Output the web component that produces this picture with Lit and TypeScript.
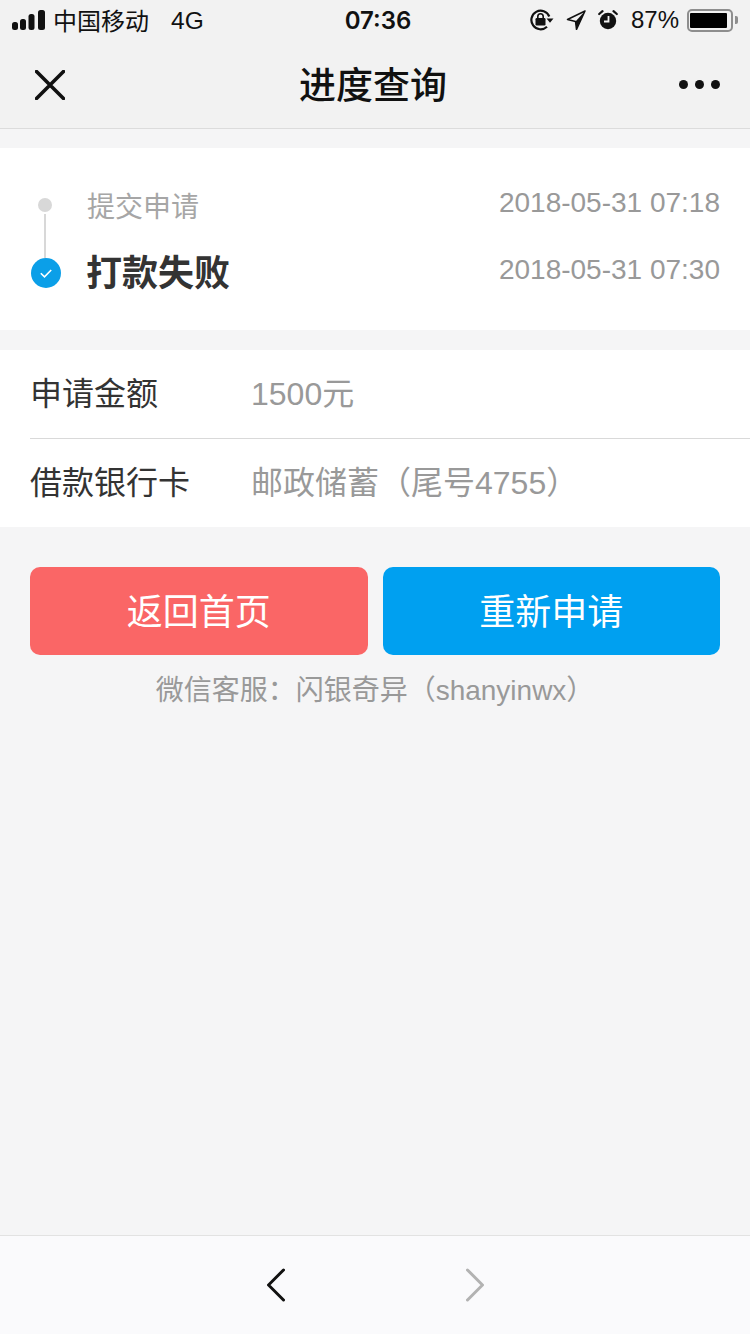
import {LitElement, html, css} from 'lit';
import {customElement} from 'lit/decorators.js';

@customElement('app-root')
export class AppRoot extends LitElement {
  render() {
    return html`
      <div class="page">
        <header class="top">
          <div class="status">
            <div class="status-left">
              <svg class="signal" width="33" height="20" viewBox="0 0 33 20">
                <rect x="0" y="12" width="6" height="8" rx="2.500" fill="#111"/>
                <rect x="8" y="9" width="6" height="11" rx="2.500" fill="#111"/>
                <rect x="16.500" y="4" width="6" height="16" rx="2.500" fill="#111"/>
                <rect x="26" y="0" width="7" height="20" rx="2.500" fill="#111"/>
              </svg>
              <span class="carrier">中国移动</span>
              <span class="net">4G</span>
            </div>
            <div class="clock">07:36</div>
            <div class="status-right">
              <svg class="lock" width="24" height="22" viewBox="0 0 24 22" fill="none">
                <path d="M19.300 7.500A9.300 9.300 0 1 0 17 17.800" stroke="#111" stroke-width="2.200"/>
                <path d="M16.500 9.500h7l-3.500 4.200z" fill="#111"/>
                <rect x="5.500" y="9" width="10" height="7.500" rx="1.200" fill="#111"/>
                <path d="M7.800 9V7.500a2.700 2.700 0 0 1 5.400 0V9" stroke="#111" stroke-width="1.600"/>
              </svg>
              <svg class="arrow" width="20" height="20" viewBox="0 0 20 20" fill="none">
                <path d="M19 1 1.500 9.500 9.500 11.500 10.500 19.500z" stroke="#111" stroke-width="1.500" stroke-linejoin="round"/>
                <path d="M19 1 9.500 11.500 10.500 19.500z" fill="#111"/>
              </svg>
              <svg class="alarm" width="20" height="20" viewBox="0 0 20 20">
                <circle cx="10" cy="11" r="8.200" fill="#111"/>
                <path d="M10.500 6v5.500H6" stroke="#f2f2f2" stroke-width="1.800" fill="none"/>
                <path d="M1.200 4 4.500 1.200M18.800 4 15.500 1.200" stroke="#111" stroke-width="2.200" stroke-linecap="round"/>
              </svg>
              <span class="pct">87%</span>
              <div class="battery"><div class="level"></div></div>
              <span class="nub"></span>
            </div>
          </div>
          <div class="nav">
            <svg class="close" width="30" height="30" viewBox="0 0 30 30">
              <path d="M1.500 1.500 28.500 28.500M28.500 1.500 1.500 28.500" stroke="#111" stroke-width="3.600" stroke-linecap="round"/>
            </svg>
            <h1>进度查询</h1>
            <div class="more"><i></i><i></i><i></i></div>
          </div>
        </header>

        <section class="steps">
          <div class="step-row first">
            <div class="marker"><span class="dot"></span></div>
            <span class="step-name">提交申请</span>
            <span class="date">2018-05-31 07:18</span>
          </div>
          <div class="step-row last">
            <div class="marker">
              <span class="line"></span>
              <svg class="tick" width="30" height="30" viewBox="0 0 30 30">
                <circle cx="15" cy="15" r="15" fill="#0b9fe8"/>
                <path d="M9.800 15.200 13.500 18.800 20.200 12" stroke="#fff" stroke-width="1.600" fill="none"/>
              </svg>
            </div>
            <span class="step-name current">打款失败</span>
            <span class="date">2018-05-31 07:30</span>
          </div>
        </section>

        <section class="info">
          <div class="info-row">
            <span class="label">申请金额</span>
            <span class="value">1500元</span>
          </div>
          <div class="info-row">
            <span class="label">借款银行卡</span>
            <span class="value">邮政储蓄（尾号4755）</span>
          </div>
        </section>

        <div class="actions">
          <button class="home">返回首页</button>
          <button class="again">重新申请</button>
        </div>
        <p class="service">微信客服：闪银奇异（shanyinwx）</p>

        <div class="spacer"></div>

        <footer class="bottom">
          <svg width="18" height="34" viewBox="0 0 18 34" fill="none">
            <path d="M16.500 2 1.500 17 16.500 32" stroke="#111" stroke-width="3" stroke-linecap="round"/>
          </svg>
          <svg width="18" height="34" viewBox="0 0 18 34" fill="none">
            <path d="M1.500 2 16.500 17 1.500 32" stroke="#b2b2b2" stroke-width="3" stroke-linecap="round"/>
          </svg>
        </footer>
      </div>
    `;
  }

  static get styles() {
    return css`
      :host {
        display: block;
        font-family: 'Liberation Sans', 'Noto Sans CJK SC', sans-serif;
      }
      .page {
        height: 1334px;
        display: flex;
        flex-direction: column;
        background: #f5f5f6;
        overflow: hidden;
      }
      .top {
        height: 129px;
        box-sizing: border-box;
        background: #f2f2f2;
        border-bottom: 1px solid #dcdcdc;
      }
      .status {
        height: 40px;
        display: grid;
        grid-template-columns: 1fr auto 1fr;
        align-items: center;
        padding: 0 12px;
        color: #111;
        font-size: 24px;
      }
      .status-left {
        display: flex;
        align-items: center;
      }
      .signal {
        margin-right: 8px;
      }
      .carrier {
        padding-bottom: 2px;
      }
      .net {
        margin-left: 22px;
        font-size: 24.500px;
        padding-top: 2px;
      }
      .clock {
        padding-left: 6px;
        font-family: Inter, 'Liberation Sans', sans-serif;
        font-size: 24px;
        font-weight: 600;
      }
      .status-right {
        display: flex;
        align-items: center;
        justify-content: flex-end;
      }
      .arrow {
        margin-left: 12px;
      }
      .alarm {
        margin-left: 12px;
      }
      .pct {
        margin-left: 13px;
        font-size: 24px;
      }
      .battery {
        box-sizing: border-box;
        width: 46px;
        height: 23px;
        margin-left: 8px;
        padding: 2px 1px;
        border: 2px solid #8e8e8e;
        border-radius: 5px;
      }
      .level {
        width: 37px;
        height: 100%;
        background: #000;
        border-radius: 1px;
      }
      .nub {
        width: 3px;
        height: 8px;
        margin-left: 2px;
        background: #8e8e8e;
        border-radius: 0 2px 2px 0;
      }
      .nav {
        height: 88px;
        display: grid;
        grid-template-columns: 1fr auto 1fr;
        align-items: center;
        padding: 0 34px 0 30px;
      }
      .close {
        margin: 1px 0 0 5px;
      }
      h1 {
        margin: 0;
        padding-top: 6px;
        color: #111;
        font-size: 37px;
        font-weight: 500;
        line-height: 82px;
      }
      .more {
        justify-self: end;
        margin-right: -4px;
        display: flex;
        gap: 7px;
      }
      .more i {
        width: 9px;
        height: 9px;
        border-radius: 50%;
        background: #111;
      }
      .steps {
        margin-top: 19px;
        height: 182px;
        box-sizing: border-box;
        padding: 29px 30px 0 30px;
        background: #fff;
      }
      .step-row {
        display: flex;
        align-items: center;
      }
      .step-row.first {
        height: 56px;
      }
      .step-row.last {
        height: 78px;
      }
      .marker {
        flex: none;
        width: 30px;
        height: 30px;
        margin-right: 27px;
        display: flex;
        align-items: center;
        justify-content: center;
        position: relative;
      }
      .dot {
        width: 14px;
        height: 14px;
        border-radius: 50%;
        background: #d8d8d8;
      }
      .line {
        position: absolute;
        left: 14px;
        bottom: 29px;
        width: 2px;
        height: 44px;
        background: #d8d8d8;
      }
      .tick {
        flex: none;
        margin: 2px 0 0 2px;
      }
      .step-name {
        flex: 1;
        color: #a6a6a6;
        font-size: 28px;
      }
      .step-name.current {
        margin-left: -1px;
        padding-bottom: 4px;
        color: #333;
        font-size: 36px;
        font-weight: 700;
      }
      .date {
        padding-bottom: 4px;
        color: #999;
        font-size: 28px;
      }
      .info {
        margin-top: 20px;
        padding-left: 30px;
        background: #fff;
      }
      .info-row {
        height: 88px;
        display: flex;
        align-items: center;
      }
      .info-row + .info-row {
        border-top: 1px solid #d9d9d9;
      }
      .label {
        width: 221px;
        padding-bottom: 6px;
        color: #333;
        font-size: 32px;
      }
      .value {
        padding-bottom: 6px;
        color: #999;
        font-size: 32px;
      }
      .actions {
        display: flex;
        gap: 15px;
        margin: 40px 30px 0;
      }
      button {
        flex: 1;
        height: 88px;
        padding: 0 0 4px;
        border: 0;
        border-radius: 10px;
        color: #fff;
        font: inherit;
        font-size: 36px;
      }
      .home {
        background: #fa6666;
      }
      .again {
        background: #00a0f0;
      }
      .service {
        margin: 17px 0 0;
        text-align: center;
        color: #999;
        font-size: 28px;
        line-height: 38px;
      }
      .spacer {
        flex: 1;
      }
      .bottom {
        height: 99px;
        box-sizing: border-box;
        display: flex;
        align-items: center;
        justify-content: center;
        gap: 181px;
        padding-left: 1px;
        background: #fafafc;
        border-top: 1px solid #e2e2e2;
      }
    `;
  }
}
